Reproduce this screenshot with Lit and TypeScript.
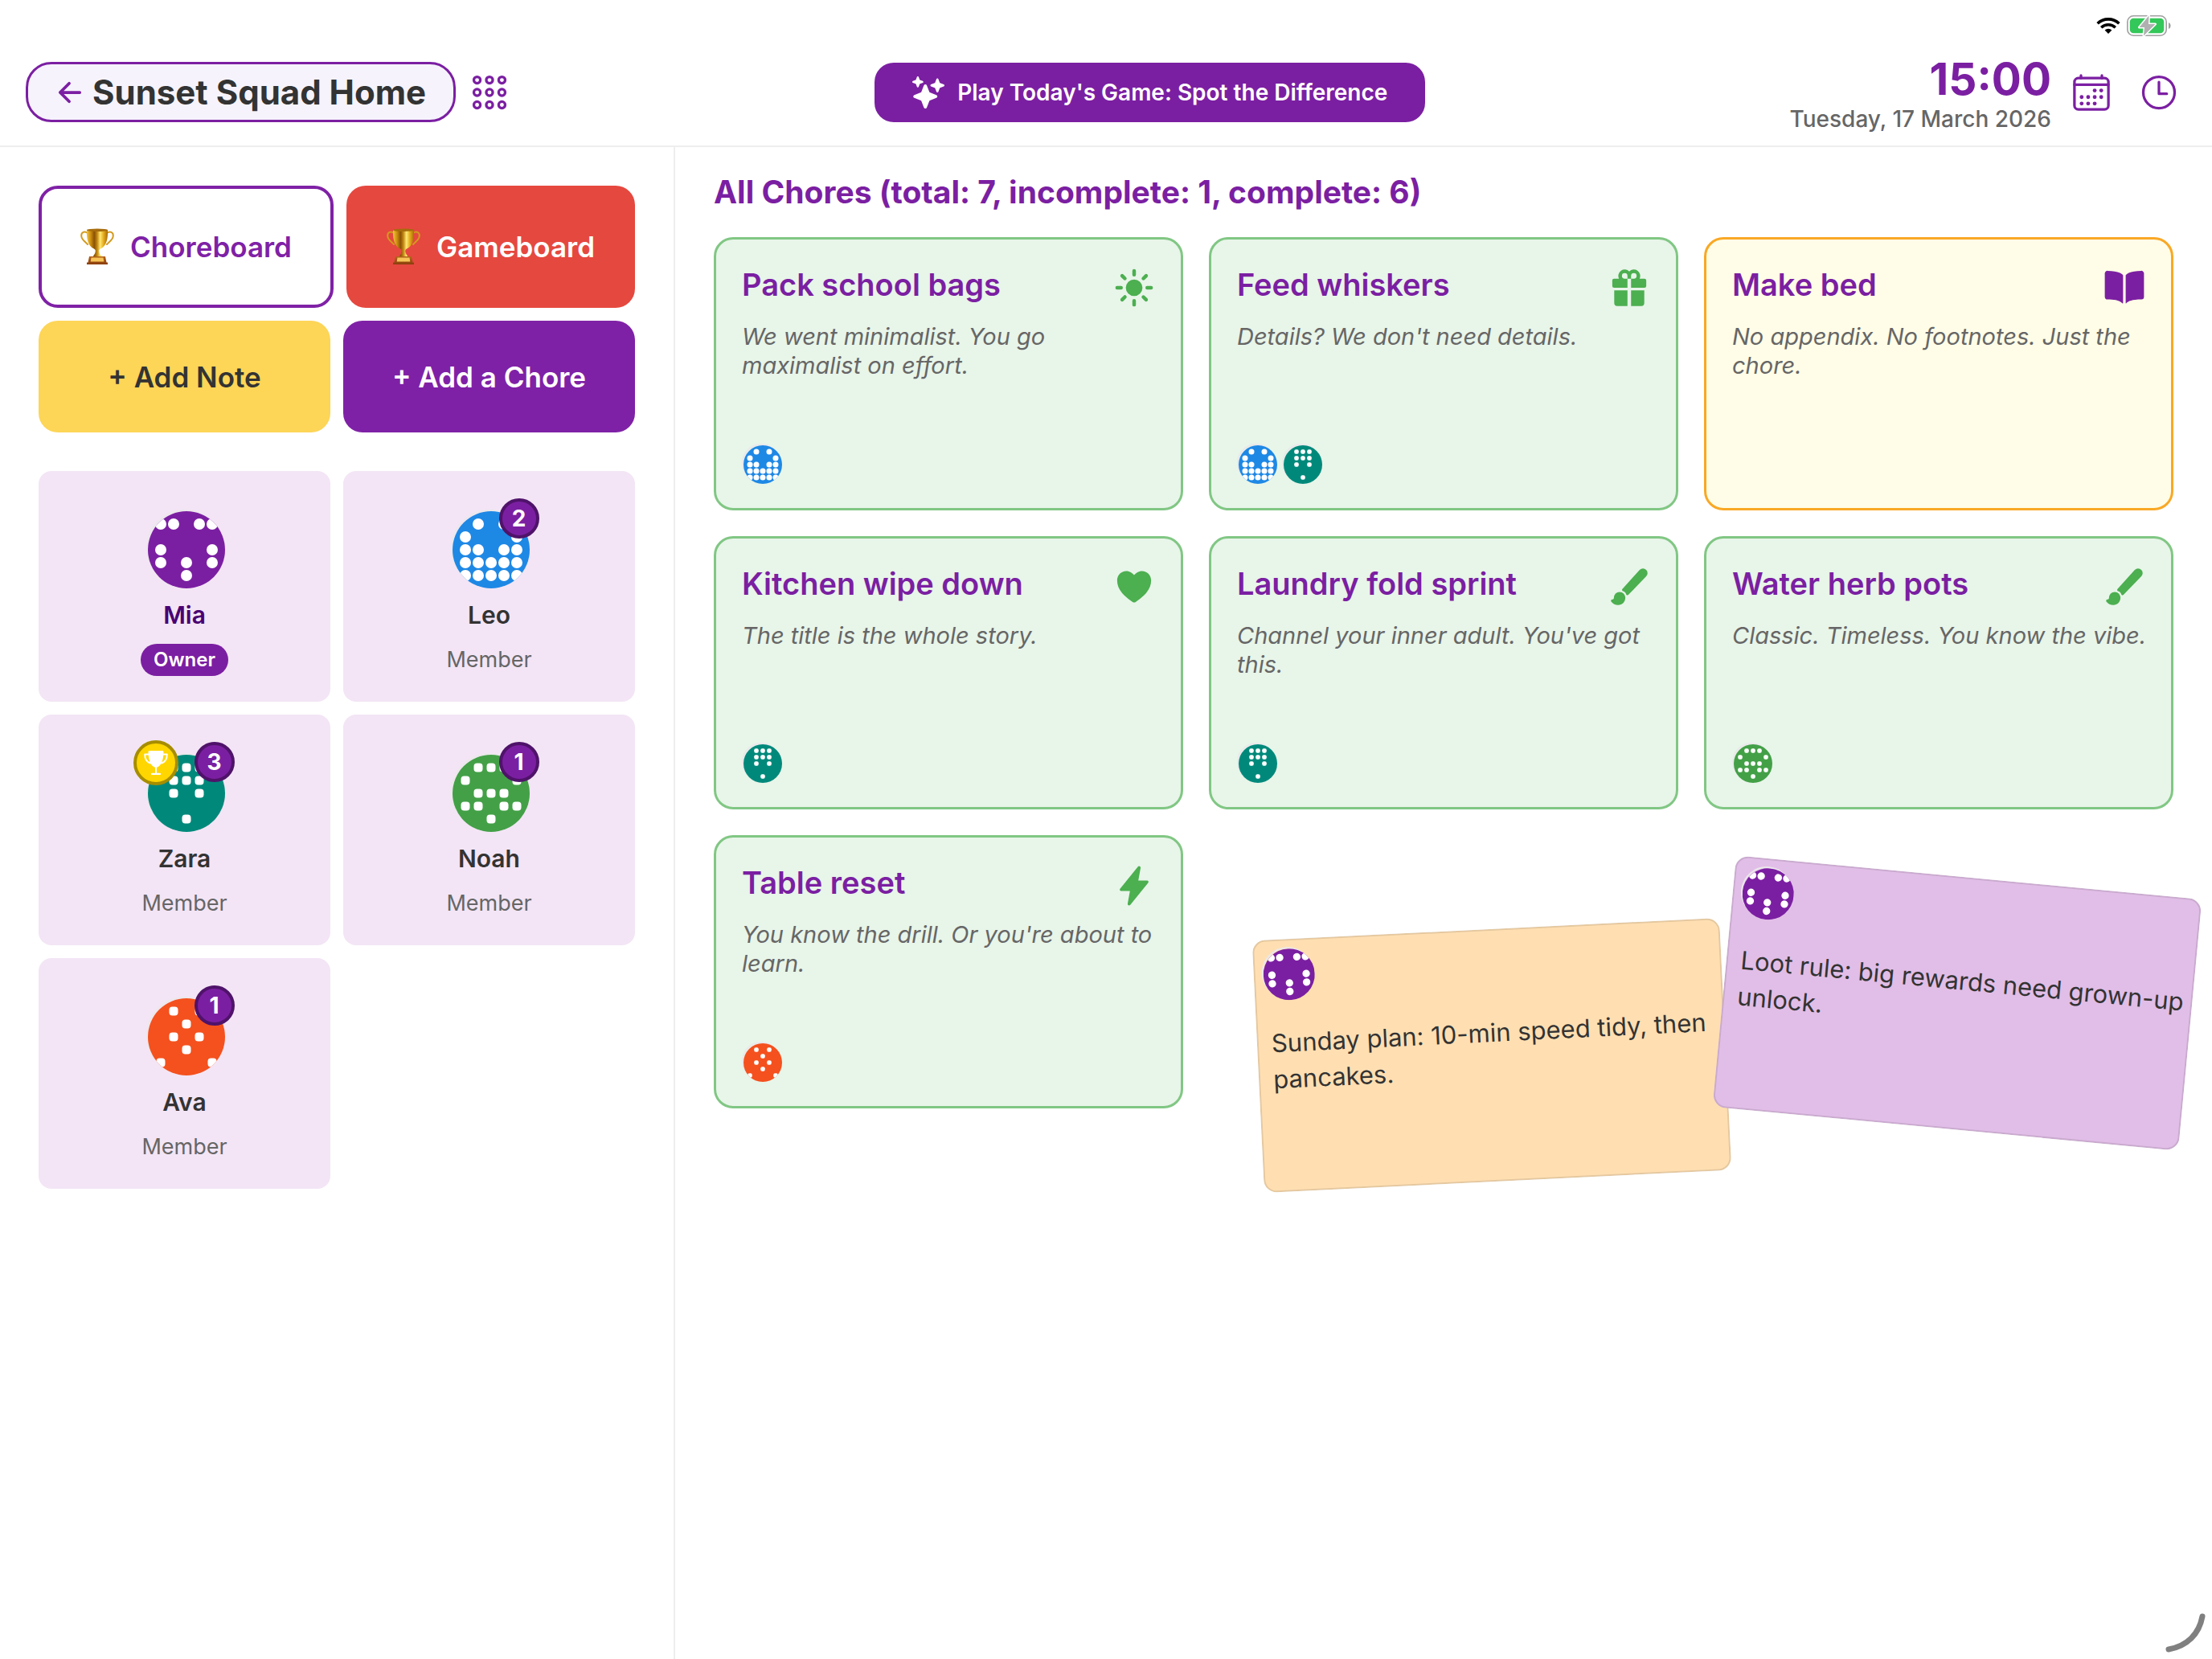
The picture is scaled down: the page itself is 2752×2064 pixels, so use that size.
import { LitElement, html, css, svg, nothing } from "lit";
import type { TemplateResult } from "lit";
import { customElement, property } from "lit/decorators.js";
import { classMap } from "lit/directives/class-map.js";

interface Person {
  name: string;
  color: string;
  dots: string[];
  round: boolean;
  owner?: boolean;
  wins?: number;
  leader?: boolean;
}

interface Chore {
  title: string;
  note: string;
  icon: string;
  done: boolean;
  by: string[];
}

/* Each avatar is a 5x5 dot pattern; "x" marks a dot. */
const PEOPLE: Record<string, Person> = {
  mia: { name: "Mia", color: "#7b1fa2", round: true, owner: true, dots: ["xx.xx", ".....", "x...x", "x.x.x", "..x.."] },
  leo: { name: "Leo", color: "#1e88e5", round: true, wins: 2, dots: [".x.x.", "x...x", "xx.xx", "xxxxx", "xxxxx"] },
  zara: { name: "Zara", color: "#00897b", round: false, wins: 3, leader: true, dots: [".xxx.", ".xxx.", ".x.x.", ".....", "..x.."] },
  noah: { name: "Noah", color: "#43a047", round: false, wins: 1, dots: [".xxx.", "x...x", ".xxx.", "xx.xx", "..x.."] },
  ava: { name: "Ava", color: "#f4511e", round: false, wins: 1, dots: [".x.x.", "..x..", ".x.x.", "..x..", "x...x"] },
};

const CHORES: Chore[] = [
  { title: "Pack school bags", note: "We went minimalist. You go maximalist on effort.", icon: "sunny", done: true, by: ["leo"] },
  { title: "Feed whiskers", note: "Details? We don't need details.", icon: "gift", done: true, by: ["leo", "zara"] },
  { title: "Make bed", note: "No appendix. No footnotes. Just the chore.", icon: "book", done: false, by: [] },
  { title: "Kitchen wipe down", note: "The title is the whole story.", icon: "heart", done: true, by: ["zara"] },
  { title: "Laundry fold sprint", note: "Channel your inner adult. You've got this.", icon: "brush", done: true, by: ["zara"] },
  { title: "Water herb pots", note: "Classic. Timeless. You know the vibe.", icon: "brush", done: true, by: ["noah"] },
  { title: "Table reset", note: "You know the drill. Or you're about to learn.", icon: "flash", done: true, by: ["ava"] },
];

const ICONS: Record<string, TemplateResult> = {
  sunny: svg`<path fill="currentColor" d="M256 118a22 22 0 01-22-22V48a22 22 0 0144 0v48a22 22 0 01-22 22zM256 486a22 22 0 01-22-22v-48a22 22 0 0144 0v48a22 22 0 01-22 22zM369.14 164.86a22 22 0 01-15.56-37.55l33.94-33.94a22 22 0 0131.11 31.11l-33.94 33.94a21.93 21.93 0 01-15.55 6.44zM108.92 425.08a22 22 0 01-15.55-37.56l33.94-33.94a22 22 0 1131.11 31.11l-33.94 33.94a21.94 21.94 0 01-15.56 6.45zM464 278h-48a22 22 0 010-44h48a22 22 0 010 44zM96 278H48a22 22 0 010-44h48a22 22 0 010 44zM403.08 425.08a21.94 21.94 0 01-15.56-6.45l-33.94-33.94a22 22 0 0131.11-31.11l33.94 33.94a22 22 0 01-15.55 37.56zM142.86 164.86a21.89 21.89 0 01-15.55-6.44l-33.94-33.94a22 22 0 0131.11-31.11l33.94 33.94a22 22 0 01-15.56 37.55zM256 358a102 102 0 11102-102 102.12 102.12 0 01-102 102z"/>`,
  gift: svg`<path fill="currentColor" d="M234 144h44v112h164a22 22 0 0022-22v-68a22 22 0 00-22-22h-59.82A77.95 77.95 0 00256 55.79 78 78 0 00129.81 144H70a22 22 0 00-22 22v68a22 22 0 0022 22h164zm44-34a34 34 0 1134 34h-34zm-112 0a34 34 0 1168 0v34h-34a34 34 0 01-34-34zM278 480h126a36 36 0 0036-36V288H278zM72 288v156a36 36 0 0036 36h126V288z"/>`,
  book: svg`<path fill="currentColor" d="M202.24 74C166.11 56.75 115.61 48.3 48 48a31.36 31.36 0 00-17.92 5.33A32 32 0 0016 79.9V366c0 19.34 13.76 33.93 32 33.93 71.07 0 142.36 6.64 185.06 47a4.11 4.11 0 006.94-3V106.82a15.89 15.89 0 00-5.46-12A143 143 0 00202.24 74zM481.92 53.3A31.33 31.33 0 00464 48c-67.61.3-118.11 8.71-154.24 26a143.31 143.31 0 00-32.31 20.78 15.93 15.93 0 00-5.45 12v337.13a3.93 3.93 0 006.68 2.81c25.67-25.5 70.72-46.82 185.36-46.81a32 32 0 0032-32v-288a32 32 0 00-14.12-26.61z"/>`,
  heart: svg`<path fill="currentColor" d="M256 448a32 32 0 01-18-5.57c-78.59-53.35-112.62-89.93-131.39-112.8-40-48.75-59.15-98.8-58.61-153C48.63 114.52 98.46 64 159.08 64c44.08 0 74.61 24.83 92.39 45.51a6 6 0 009.06 0C278.31 88.81 308.84 64 352.92 64c60.62 0 110.45 50.52 111.08 112.64.54 54.21-18.63 104.26-58.61 153-18.77 22.87-52.8 59.45-131.39 112.8a32 32 0 01-18 5.56z"/>`,
  brush: svg`<path fill="currentColor" d="M233.15 360.11a15.7 15.7 0 01-4.92-.77 16 16 0 01-10.92-13c-2.15-15-19.95-32.46-36.62-35.85A16 16 0 01172 284.16L383.09 49.06c.19-.22.39-.43.59-.63a56.57 56.57 0 0180 80l-219 227a16 16 0 01-11.51 4.68zM119.89 480.11c-32.14 0-65.45-16.89-84.85-43a16 16 0 0112.85-25.54c5.34 0 20-4.87 20-20.57 0-39.07 31.4-70.86 70-70.86s70 31.79 70 70.86c0 49.12-39.48 89.11-88 89.11z"/>`,
  flash: svg`<path fill="currentColor" d="M194.82 496a18.36 18.36 0 01-18.1-21.53v-.11L204.83 320H96a16 16 0 01-12.44-26.06L302.73 23a18.45 18.45 0 0132.8 13.71c0 .3-.08.59-.13.89L307.19 192H416a16 16 0 0112.44 26.06L209.24 489a18.45 18.45 0 01-14.42 7z"/>`,
  arrow: svg`<g fill="none" stroke="currentColor" stroke-width="48" stroke-linecap="round" stroke-linejoin="round"><path d="M244 400L100 256l144-144M120 256h292"/></g>`,
  sparkles: svg`<path fill="currentColor" d="M208 512a24.84 24.84 0 01-23.34-16l-39.84-103.6a16.06 16.06 0 00-9.19-9.19L32 343.34a25 25 0 010-46.68l103.6-39.84a16.06 16.06 0 009.19-9.19L184.66 144a25 25 0 0146.68 0l39.84 103.6a16.06 16.06 0 009.19 9.19l103 39.63a25.49 25.49 0 0116.63 24.1 24.82 24.82 0 01-16 22.82l-103.6 39.84a16.06 16.06 0 00-9.19 9.19L231.34 496A24.84 24.84 0 01208 512zM88 176a14.67 14.67 0 01-13.69-9.4l-16.86-43.84a7.28 7.28 0 00-4.21-4.21L9.4 101.69a14.67 14.67 0 010-27.38l43.84-16.86a7.31 7.31 0 004.21-4.21L74.16 9.79A15 15 0 0186.23.11a14.67 14.67 0 0115.46 9.29l16.86 43.84a7.31 7.31 0 004.21 4.21l43.84 16.86a14.67 14.67 0 010 27.38l-43.84 16.86a7.28 7.28 0 00-4.21 4.21l-16.86 43.84A14.67 14.67 0 0188 176zM400 256a16 16 0 01-14.93-10.26l-22.84-59.37a8 8 0 00-4.6-4.6l-59.37-22.84a16 16 0 010-29.86l59.37-22.84a8 8 0 004.6-4.6l22.67-58.95a16.45 16.45 0 0113.17-10.57 16 16 0 0116.86 10.15l22.84 59.37a8 8 0 004.6 4.6l59.37 22.84a16 16 0 010 29.86l-59.37 22.84a8 8 0 00-4.6 4.6l-22.84 59.37A16 16 0 01400 256z"/>`,
  apps: svg`<g fill="none" stroke="currentColor" stroke-width="32">${[104, 256, 408].map((y) => [104, 256, 408].map((x) => svg`<circle cx=${x} cy=${y} r="40"/>`))}</g>`,
  calendar: svg`<g fill="none" stroke="currentColor" stroke-width="32" stroke-linejoin="round" stroke-linecap="round"><rect x="48" y="80" width="416" height="384" rx="48"/><path d="M128 48v32M384 48v32M464 160H48"/></g><g fill="currentColor">${[[296, 232], [376, 232], [136, 312], [216, 312], [296, 312], [376, 312], [136, 392], [216, 392], [296, 392]].map(([x, y]) => svg`<circle cx=${x} cy=${y} r="24"/>`)}</g>`,
  clock: svg`<g fill="none" stroke="currentColor" stroke-width="32" stroke-linecap="round" stroke-linejoin="round"><circle cx="256" cy="256" r="192"/><path d="M256 128v144h96"/></g>`,
};

const icon = (name: string, cls: string) =>
  html`<svg class=${cls} viewBox="0 0 512 512" aria-hidden="true">${ICONS[name]}</svg>`;

const trophy = html`<svg class="trophy" viewBox="0 0 42 46" aria-hidden="true">
  <defs>
    <linearGradient id="cup" x1="0" x2="1">
      <stop offset="0" stop-color="#f3c63b" /><stop offset=".2" stop-color="#c98a10" />
      <stop offset=".36" stop-color="#8a5205" /><stop offset=".5" stop-color="#c58a12" />
      <stop offset=".64" stop-color="#ffe873" /><stop offset=".8" stop-color="#e6ac1c" />
      <stop offset="1" stop-color="#a86a08" />
    </linearGradient>
    <linearGradient id="foot" x1="0" x2="0" y1="0" y2="1">
      <stop offset="0" stop-color="#b5651a" /><stop offset="1" stop-color="#8b3d0c" />
    </linearGradient>
  </defs>
  <g fill="none" stroke="#d39a1c" stroke-width="2" stroke-linecap="round">
    <path d="M9 6C5 3 1 5 1.200 9.500 1.500 14 5 16 9 20" /><path d="M33 6c4-3 8-1 7.800 3.500C40.500 14 37 16 33 20" />
  </g>
  <path fill="url(#cup)" d="M8 2h26c.4 10-1 20-9 23.500-1.500 1-2 2-1.700 3.500.3 2.500 1.700 4 3 6H15.700c1.300-2 2.700-3.500 3-6 .3-1.500-.2-2.500-1.700-3.500C9 22 7.600 12 8 2z" />
  <ellipse cx="21" cy="2.200" rx="13" ry="1.700" fill="#a66c0c" />
  <path fill="url(#foot)" d="M11 35h20l1.500 7.500H34V45H8v-2.500h1.500z" />
  <path fill="#f6c457" d="M13.500 36.500h15l.8 5H12.700z" />
</svg>`;

@customElement("dot-avatar")
export class DotAvatar extends LitElement {
  static styles = css`
    :host {
      display: flex;
      flex: none;
      box-sizing: border-box;
      width: 96px;
      height: 96px;
      border: 2px solid #ebe8eb;
      border-radius: 50%;
    }
    :host([size="small"]) {
      width: 48px;
      height: 48px;
    }
    :host([size="medium"]) {
      width: 64px;
      height: 64px;
    }
    .disc {
      flex: none;
      width: 96px;
      height: 96px;
      border-radius: 50%;
    }
    :host([size="small"]) .disc {
      width: 48px;
      height: 48px;
    }
    :host([size="medium"]) .disc {
      width: 64px;
      height: 64px;
    }
  `;

  @property({ attribute: false }) person!: Person;
  @property({ reflect: true }) size = "large";

  render() {
    const { color, dots, round, name } = this.person;
    const side = round ? 14 : 11;
    return html`<svg class="disc" viewBox="0 0 96 96" role="img" aria-label=${name}>
      <rect width="96" height="96" fill=${color} />
      ${dots.map((row, r) =>
        [...row].map((cell, c) =>
          cell === "x"
            ? svg`<rect fill="#fff" x=${16 * (c + 1) - side / 2} y=${16 * (r + 1) - side / 2} width=${side} height=${side} rx=${round ? 7 : 4}/>`
            : nothing
        )
      )}
    </svg>`;
  }
}

@customElement("member-card")
export class MemberCard extends LitElement {
  static styles = css`
    :host {
      display: flex;
      flex-direction: column;
      align-items: center;
      gap: 16px;
      padding: 48px 16px 32px;
      border-radius: 16px;
      background: #f3e5f5;
    }
    .portrait {
      position: relative;
    }
    .wins,
    .leader {
      position: absolute;
      display: flex;
      align-items: center;
      justify-content: center;
      box-sizing: border-box;
      border-radius: 50%;
    }
    .wins {
      top: -14px;
      right: -14px;
      width: 50px;
      height: 50px;
      border: 4px solid #4f136a;
      background: #7b1fa2;
      color: #fff;
      font-size: 28px;
      font-weight: 700;
    }
    .leader {
      top: -16px;
      left: -16px;
      width: 56px;
      height: 56px;
      border: 4px solid #a68d00;
      background: #ffd600;
    }
    .cup {
      width: 30px;
      height: 30px;
    }
    .name {
      margin: 0;
      font-size: 30px;
      font-weight: 600;
      line-height: 39px;
      color: #333;
    }
    .name.me {
      color: #4a0072;
    }
    .role {
      font-size: 27px;
      line-height: 40px;
      color: #666;
    }
    .role.owner {
      padding: 0 16px;
      border-radius: 20px;
      background: #7b1fa2;
      color: #fff;
      font-size: 24px;
      font-weight: 600;
    }
  `;

  @property({ attribute: false }) person!: Person;

  render() {
    const p = this.person;
    return html`
      <div class="portrait">
        <dot-avatar .person=${p}></dot-avatar>
        ${p.leader
          ? html`<span class="leader">
              <svg class="cup" viewBox="0 0 30 30" role="img" aria-label="Leader">
                <path fill="#fff" d="M5.500 1.500C5.500.7 6.200 0 7 0h16c.8 0 1.500.7 1.500 1.500C24.500 10.500 22 20 15 21 8 20 5.500 10.500 5.500 1.500zM14 20h2v8h-2zM10 27.800h10a1 1 0 010 2.200H10a1 1 0 010-2.200z" />
                <path fill="none" stroke="#fff" stroke-width="2" stroke-linecap="round" stroke-linejoin="round" d="M6 4.500H1.200C1.200 10 3.500 14 8 15.500M24 4.500h4.800C28.800 10 26.500 14 22 15.500" />
              </svg>
            </span>`
          : nothing}
        ${p.wins ? html`<span class="wins">${p.wins}</span>` : nothing}
      </div>
      <h3 class=${classMap({ name: true, me: !!p.owner })}>${p.name}</h3>
      <span class=${classMap({ role: true, owner: !!p.owner })}>${p.owner ? "Owner" : "Member"}</span>
    `;
  }
}

@customElement("chore-card")
export class ChoreCard extends LitElement {
  static styles = css`
    :host {
      display: flex;
      flex-direction: column;
      box-sizing: border-box;
      min-height: 340px;
      padding: 32px 28px 32px 32px;
      border: 3px solid #f9a825;
      border-radius: 24px;
      background: #fffde7;
    }
    :host([done]) {
      border-color: #81c784;
      background: #e8f5e9;
    }
    .head {
      display: flex;
      align-items: flex-start;
      justify-content: space-between;
      gap: 16px;
      padding-right: 4px;
      color: #7b1fa2;
    }
    .title {
      margin: 0;
      font-size: 38px;
      font-weight: 600;
      line-height: 49px;
    }
    .icon {
      flex: none;
      width: 52px;
      height: 52px;
      padding-top: 2px;
    }
    :host([done]) .icon {
      color: #4caf50;
    }
    .note {
      margin: 17px 0 0;
      font-size: 29px;
      font-style: italic;
      line-height: 36px;
      color: #666;
    }
    .people {
      display: flex;
      gap: 8px;
      margin-top: auto;
    }
  `;

  @property({ attribute: false }) chore!: Chore;
  @property({ type: Boolean, reflect: true }) done = false;

  render() {
    const { title, note, by } = this.chore;
    return html`
      <div class="head">
        <h3 class="title">${title}</h3>
        ${icon(this.chore.icon, "icon")}
      </div>
      <p class="note">${note}</p>
      <div class="people">
        ${by.map((id) => html`<dot-avatar size="small" .person=${PEOPLE[id]}></dot-avatar>`)}
      </div>
    `;
  }
}

@customElement("app-root")
export class AppRoot extends LitElement {
  static styles = css`
    :host {
      display: flex;
      flex-direction: column;
      min-height: 100vh;
      background: #fff;
      color: #333;
      font-family: Inter, "Liberation Sans", sans-serif;
    }
    button {
      margin: 0;
      padding: 0;
      border: 0;
      background: none;
      color: inherit;
      font: inherit;
      cursor: pointer;
    }
    .status {
      display: flex;
      align-items: center;
      justify-content: flex-end;
      gap: 8px;
      height: 32px;
      padding: 16px 50px 0 0;
    }
    .wifi {
      width: 30px;
      height: 20px;
    }
    .battery {
      width: 56px;
      height: 28px;
    }
    .bar {
      display: flex;
      align-items: center;
      justify-content: space-between;
      padding: 16px 40px 16px 32px;
      border-bottom: 2px solid #eee;
    }
    .cluster {
      display: flex;
      align-items: center;
      gap: 16px;
    }
    .home {
      display: flex;
      align-items: center;
      gap: 8px;
      padding: 8px 34px 8px 32px;
      border: 3px solid #7b1fa2;
      border-radius: 32px;
      background: #f6f3fc;
    }
    .home-title {
      margin: 0;
      font-size: 42px;
      font-weight: 700;
      line-height: 53px;
    }
    .glyph {
      display: block;
      flex: none;
      width: 52px;
      height: 52px;
      color: #7b1fa2;
    }
    .small-glyph {
      flex: none;
      width: 40px;
      height: 40px;
    }
    .home .small-glyph {
      color: #7b1fa2;
    }
    .play {
      display: flex;
      align-items: center;
      gap: 16px;
      min-height: 74px;
      padding: 0 47px;
      border-radius: 24px;
      background: #7b1fa2;
      color: #fff;
      font-size: 28px;
      font-weight: 600;
    }
    .tools {
      display: flex;
      align-items: center;
      gap: 32px;
    }
    .now {
      margin-right: -8px;
      text-align: right;
    }
    .time {
      display: block;
      font-size: 55px;
      font-weight: 700;
      line-height: 68px;
      color: #7b1fa2;
    }
    .date {
      display: block;
      font-size: 28px;
      font-weight: 500;
      line-height: 33px;
      color: #666;
    }
    .body {
      display: grid;
      flex: 1;
      grid-template-columns: min(840px, 40vw) 1fr;
    }
    .side {
      display: flex;
      flex-direction: column;
      gap: 16px;
      padding: 48px;
      border-right: 2px solid #eee;
    }
    .row {
      display: flex;
      gap: 16px;
    }
    .tile {
      box-sizing: border-box;
      display: flex;
      flex: 1 1 0;
      align-items: center;
      justify-content: center;
      gap: 20px;
      min-height: 139px;
      border-radius: 24px;
      font-size: 35px;
      font-weight: 600;
    }
    .tile.tall {
      min-height: 152px;
    }
    .chores {
      border: 4px solid #7f21a6;
      background: #fff;
      color: #7f21a6;
    }
    .games {
      background: #e5483f;
      color: #fff;
    }
    .add-note {
      background: #fdd557;
    }
    .add-chore {
      background: #7f21a6;
      color: #fff;
    }
    .trophy {
      width: 42px;
      height: 46px;
    }
    .members {
      display: grid;
      grid-template-columns: 1fr 1fr;
      gap: 16px;
      margin-top: 32px;
    }
    .board {
      position: relative;
      padding: 32px 48px 48px;
    }
    .heading {
      margin: 0 0 32px;
      font-size: 39px;
      font-weight: 700;
      line-height: 48px;
      color: #7b1fa2;
    }
    .cards {
      display: grid;
      grid-template-columns: repeat(3, 1fr);
      gap: 32px;
    }
    .sticky {
      position: absolute;
      box-sizing: border-box;
      display: flex;
      flex-direction: column;
      gap: 32px;
      width: 582px;
      min-height: 314px;
      padding: 8px;
      border: 2px solid rgba(0, 0, 0, 0.1);
      border-radius: 16px;
    }
    .sticky-text {
      margin: 0 0 0 8px;
      font-size: 31px;
      line-height: 45px;
    }
    .orange {
      top: 973px;
      right: 605px;
      background-color: #ffdfb2;
      transform: rotate(-2.8deg);
    }
    .lilac {
      top: 908px;
      right: 26px;
      background-color: #e1bee7;
      transform: rotate(5.4deg);
    }
    .corner {
      position: fixed;
      right: 5px;
      bottom: 4px;
      width: 56px;
      height: 56px;
    }
  `;

  render() {
    const done = CHORES.filter((c) => c.done).length;
    return html`
      <div class="status">
        <svg class="wifi" viewBox="0 0 30 20" role="img" aria-label="Wi-Fi">
          <g fill="none" stroke="#000" stroke-width="3.600">
            <path d="M1.600 7.200a19.500 19.500 0 0126.800 0" />
            <path d="M6.200 12.200a13 13 0 0117.600 0" />
          </g>
          <path d="M15 20l-4.400-4.500a6.300 6.300 0 018.800 0z" />
        </svg>
        <svg class="battery" viewBox="0 0 56 28" role="img" aria-label="Battery charging">
          <rect x=".8" y="1.800" width="48.400" height="24.400" rx="7.500" fill="none" stroke="#a0a0a0" stroke-width="1.600" />
          <rect x="3.800" y="4.800" width="42.400" height="18.400" rx="4.500" fill="#34c759" />
          <path d="M52 10c3.400 1.300 3.400 6.700 0 8z" fill="#a0a0a0" />
          <path d="M27.500 1.500L15.500 16H22l-1 10.500L35.500 12H27z" fill="#b0b0b0" stroke="#fff" stroke-width="3" stroke-linejoin="round" paint-order="stroke" />
        </svg>
      </div>

      <header class="bar">
        <div class="cluster">
          <button class="home">${icon("arrow", "small-glyph")}<span class="home-title">Sunset Squad Home</span></button>
          <button aria-label="All boards">${icon("apps", "glyph")}</button>
        </div>
        <button class="play">${icon("sparkles", "small-glyph")}<span>Play Today's Game: Spot the Difference</span></button>
        <div class="tools">
          <div class="now">
            <time class="time">15:00</time>
            <time class="date" datetime="2026-03-17">Tuesday, 17 March 2026</time>
          </div>
          <button aria-label="Calendar">${icon("calendar", "glyph")}</button>
          <button aria-label="Clock">${icon("clock", "glyph")}</button>
        </div>
      </header>

      <div class="body">
        <aside class="side">
          <div class="row">
            <button class="tile tall chores">${trophy}<span>Choreboard</span></button>
            <button class="tile tall games">${trophy}<span>Gameboard</span></button>
          </div>
          <div class="row">
            <button class="tile add-note">+ Add Note</button>
            <button class="tile add-chore">+ Add a Chore</button>
          </div>
          <div class="members">
            ${Object.values(PEOPLE).map((p) => html`<member-card .person=${p}></member-card>`)}
          </div>
        </aside>

        <main class="board">
          <h2 class="heading">All Chores (total: ${CHORES.length}, incomplete: ${CHORES.length - done}, complete: ${done})</h2>
          <div class="cards">
            ${CHORES.map((c) => html`<chore-card .chore=${c} .done=${c.done}></chore-card>`)}
          </div>
          <article class="sticky orange">
            <dot-avatar size="medium" .person=${PEOPLE.mia}></dot-avatar>
            <p class="sticky-text">Sunday plan: 10-min speed tidy, then pancakes.</p>
          </article>
          <article class="sticky lilac">
            <dot-avatar size="medium" .person=${PEOPLE.mia}></dot-avatar>
            <p class="sticky-text">Loot rule: big rewards need grown-up unlock.</p>
          </article>
        </main>
      </div>

      <svg class="corner" viewBox="0 0 56 56" aria-hidden="true">
        <path d="M7 48C30 44 45 29 49 7" fill="none" stroke="#808080" stroke-width="7" stroke-linecap="round" />
      </svg>
    `;
  }
}
